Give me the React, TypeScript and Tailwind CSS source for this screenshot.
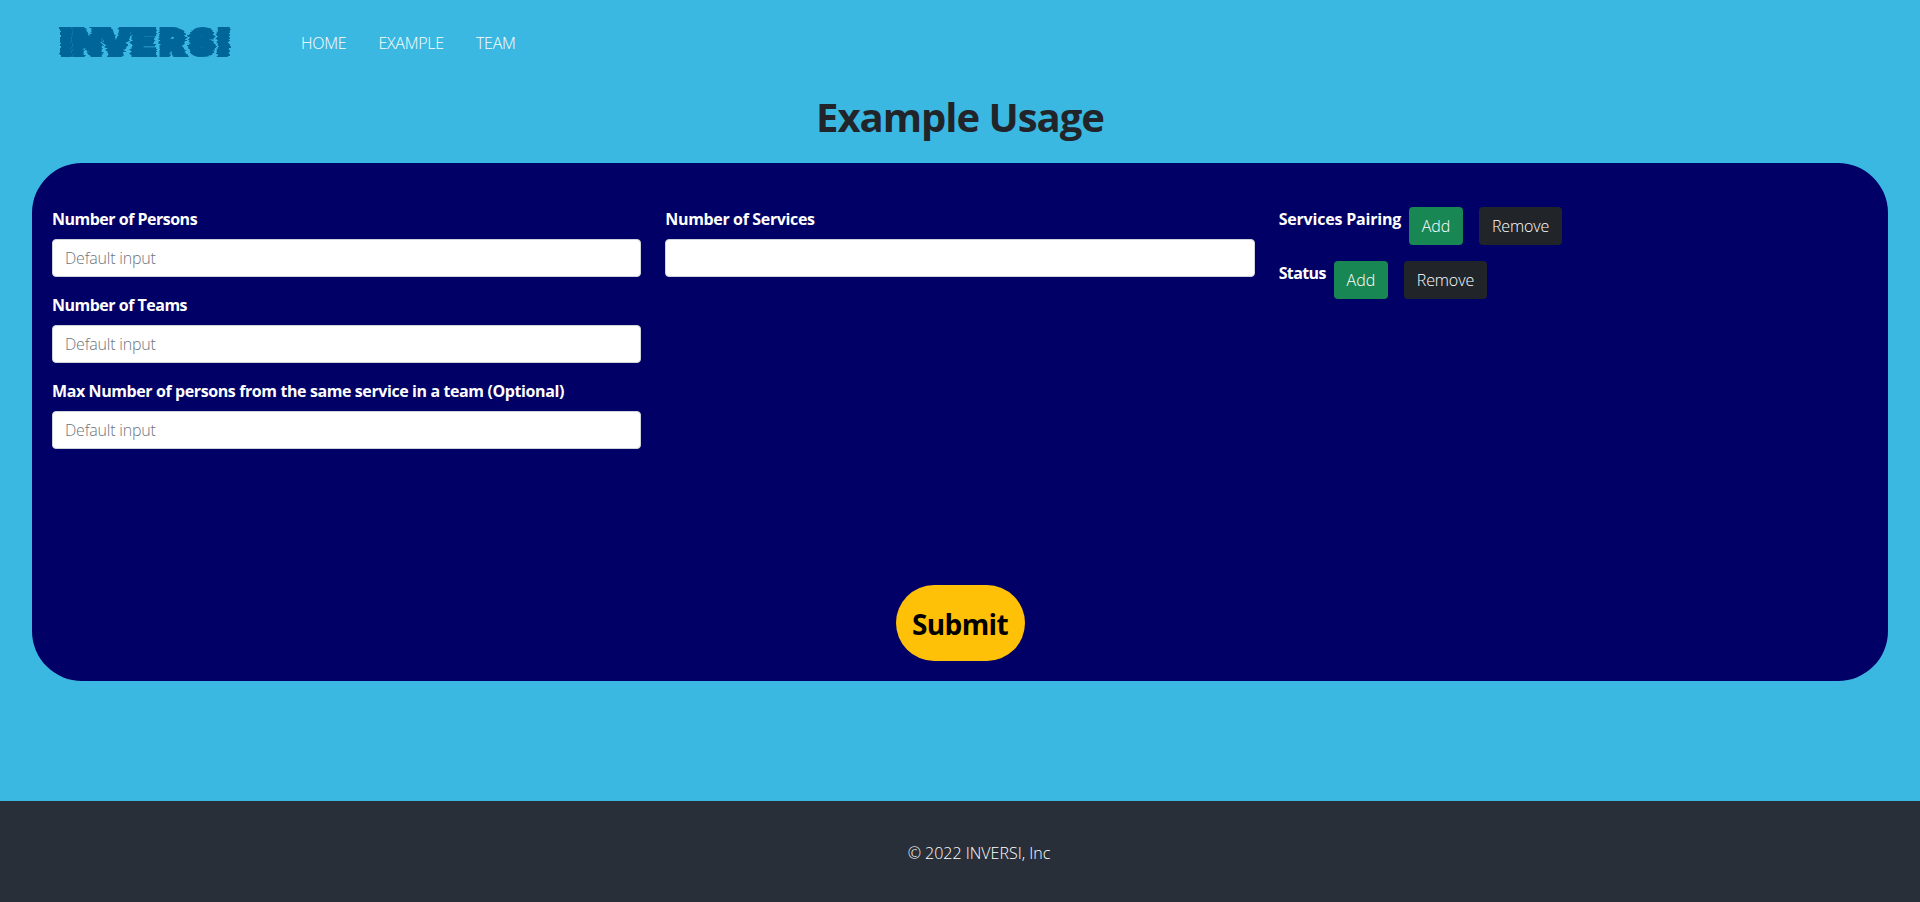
function Logo() {
  return (
    <svg className="-mx-2 -my-2 h-[46px] w-[196px]" viewBox="-8 -8 196 46" aria-label="INVERSI">
      <filter id="glitch" x="-8" y="-8" width="196" height="46" filterUnits="userSpaceOnUse" colorInterpolationFilters="sRGB">
        <feTurbulence type="turbulence" baseFrequency="0.03 0.28" numOctaves="2" seed="4" stitchTiles="noStitch" result="n" />
        <feColorMatrix in="n" type="matrix" values="1 0 0 0 0.3  0 0 0 0 0.5  0 0 0 0 0.5  0 0 0 0 1" result="m" />
        <feDisplacementMap in="SourceGraphic" in2="m" scale="5" xChannelSelector="R" yChannelSelector="G" />
      </filter>
      <g filter="url(#glitch)">
        <text
          transform="scale(1.08 1)"
          x="2.4 13.6 39.5 68.5 94.5 121.5 148.5"
          y="28"
          fontFamily="Inter"
          fontWeight="900"
          fontSize="35.5"
          fill="#006699"
          stroke="#006699"
          strokeWidth="4.2"
        >
          INVERSI
        </text>
      </g>
    </svg>
  );
}

function Field({ label, tracking, placeholder }: { label: string; tracking: string; placeholder?: string }) {
  return (
    <div className="mb-4">
      <label className={`mb-2 block h-6 leading-6 font-bold text-white ${tracking}`}>{label}</label>
      <input
        placeholder={placeholder}
        className="block h-[38px] w-full rounded-[4px] border border-[#ced4da] bg-white px-3 font-light tracking-[-0.2px] placeholder:text-[#6c757d]"
      />
    </div>
  );
}

function Pair({ label, tracking }: { label: string; tracking: string }) {
  return (
    <div className="mb-4 flex h-[38px] items-start font-light text-white">
      <span className={`mr-2 leading-6 font-bold ${tracking}`}>{label}</span>
      <button className="mr-4 h-[38px] w-[54px] rounded-[4px] bg-[#198754]">Add</button>
      <button className="h-[38px] w-[83px] rounded-[4px] bg-[#212529] tracking-[-0.1px]">Remove</button>
    </div>
  );
}

export default function App() {
  return (
    <div className="flex h-[902px] flex-col bg-[#3bb8e1] font-['Open_Sans',sans-serif] text-base">
      <header className="flex h-[87px] shrink-0 items-start pt-[27px] pl-[58px] font-light text-white">
        <Logo />
        <nav className="ml-[63px] flex gap-8 pt-1 leading-6 tracking-[-0.25px]">
          <a>HOME</a>
          <a>EXAMPLE</a>
          <a>TEAM</a>
        </nav>
      </header>
      <h1 className="h-[76px] shrink-0 text-center text-[40px] leading-[60px] font-bold tracking-[-1px] text-[#212529]">Example Usage</h1>
      <main className="mx-8 flex h-[518px] shrink-0 flex-col rounded-[50px] bg-[#000066] px-2 pt-11">
        <div className="grid h-[378px] grid-cols-3">
          <div className="px-3">
            <Field label="Number of Persons" tracking="tracking-[-0.5px]" placeholder="Default input" />
            <Field label="Number of Teams" tracking="tracking-[-0.5px]" placeholder="Default input" />
            <Field
              label="Max Number of persons from the same service in a team (Optional)"
              tracking="tracking-[-0.4px]"
              placeholder="Default input"
            />
          </div>
          <div className="px-3">
            <Field label="Number of Services" tracking="tracking-[-0.35px]" />
          </div>
          <div className="px-3">
            <Pair label="Services Pairing" tracking="tracking-[-0.2px]" />
            <Pair label="Status" tracking="tracking-[-0.6px]" />
          </div>
        </div>
        <button className="mx-auto h-[76px] w-[129px] rounded-[40px] bg-[#ffc107] pt-0.5 text-[28px] font-bold tracking-[-0.6px] text-black">
          Submit
        </button>
      </main>
      <footer className="mt-[120px] flex flex-1 justify-center bg-[#292f39] pt-10 pl-[38px] leading-6 font-light text-white">
        <p>© 2022 INVERSI, Inc</p>
      </footer>
    </div>
  );
}
